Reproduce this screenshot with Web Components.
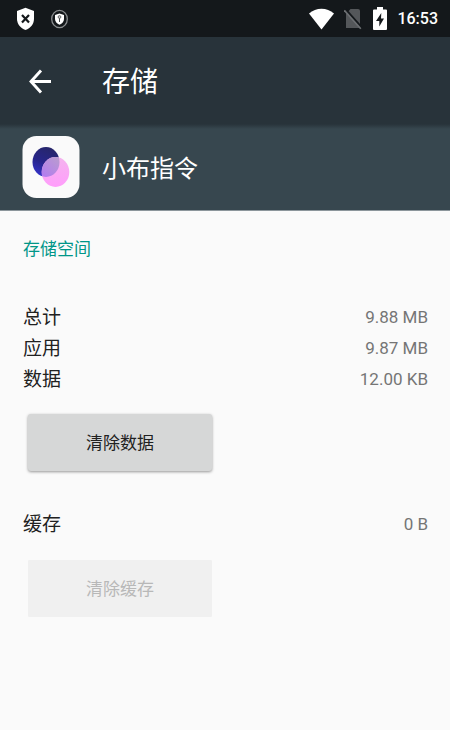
<!DOCTYPE html>
<html lang="zh-CN">
<head>
<meta charset="utf-8">
<meta name="viewport" content="width=device-width, initial-scale=1">
<title>存储</title>
<style>
body { margin: 0; background: #fafafa; font-family: Roboto, "Noto Sans CJK SC", sans-serif; color: #212121; }
</style>
</head>
<body>
<storage-screen></storage-screen>
<script>
function define(name, html, setup) {
  const template = document.createElement('template');
  template.innerHTML = html;
  customElements.define(name, class extends HTMLElement {
    constructor() {
      super();
      this.attachShadow({ mode: 'open' }).append(template.content.cloneNode(true));
    }
    connectedCallback() { if (setup) setup(this, this.shadowRoot); }
  });
}

define('status-bar', `
<style>
:host { display: flex; align-items: center; justify-content: space-between; height: 37px; padding: 0 12px 0 16px; background: #14181b; color: #fff; }
div { display: flex; align-items: center; }
.left { gap: 16px; }
.right { gap: 10px; }
svg { display: block; }
time { font-size: 16px; font-weight: 500; line-height: 20px; }
</style>
<div class="left">
  <svg width="19" height="24" viewBox="0 0 19 24" aria-hidden="true"><path d="M9.500.8 18 4v8c0 5-3.500 9.200-8.500 11C4.500 21.200 1 17 1 12V4Z" fill="#fff"/><path d="m6 8 7 7.500m0-7.500-7 7.500" stroke="#14181b" stroke-width="2.200"/></svg>
  <svg width="18" height="20" viewBox="0 0 18 20" aria-hidden="true"><ellipse cx="8.500" cy="10" rx="7.800" ry="8.700" fill="none" stroke="#8b8e90" stroke-width="1.300"/><path d="M8.500 4.500 13 6v4c0 2.700-1.900 4.600-4.500 5.700C5.900 14.600 4 12.700 4 10V6Z" fill="#fff"/><path d="M8.500 8.500V13" stroke="#44484a"/><circle cx="8.500" cy="8" r="1.400" fill="#ccc" stroke="#44484a" stroke-width=".7"/></svg>
</div>
<div class="right">
  <svg width="25" height="22" viewBox="0 0 25 22" aria-hidden="true"><path d="M0 5.500C7-1 18-1 25 5.500L12.500 21.500Z" fill="#fff"/></svg>
  <svg width="19" height="22" viewBox="0 0 19 22" aria-hidden="true"><path d="M6.500 1H14a2 2 0 0 1 2 2v17H2V6Z" fill="#54575a"/><path d="m1.500 1.500 16 18" stroke="#14181b" stroke-width="2.600"/><path d="m.3 2.300 16.500 18.500" stroke="#6c6f72" stroke-width="1.700"/></svg>
  <svg width="14" height="23" viewBox="0 0 14 23" aria-hidden="true"><path d="M4 0h6v2.500h3a1 1 0 0 1 1 1V22a1 1 0 0 1-1 1H1a1 1 0 0 1-1-1V3.500a1 1 0 0 1 1-1h3Z" fill="#fff"/><path d="M8.300 6 3 14h3.300v5.500L11 11.500H8Z" fill="#14181b"/></svg>
  <time datetime="16:53">16:53</time>
</div>`);

define('app-bar', `
<style>
:host { display: flex; align-items: center; gap: 38px; height: 87px; padding: 0 16px; background: #28333a; color: #fff; }
button { display: grid; place-items: center; width: 48px; height: 48px; margin: 0; padding: 0; border: 0; background: none; color: inherit; }
h1 { margin: 0; padding-top: 4px; font-size: 28px; line-height: 40px; font-weight: 400; }
</style>
<button type="button" aria-label="返回"><svg width="24" height="26" viewBox="0 0 24 26" fill="none" stroke="currentColor" stroke-width="2.900" aria-hidden="true"><path d="M23 13.500H3M13 2.500 3 13.500l10 11"/></svg></button>
<h1><slot></slot></h1>`);

define('app-logo', `
<style>:host, svg { display: block; }</style>
<svg width="58" height="64" viewBox="0 0 58 64" aria-hidden="true">
  <defs>
    <linearGradient id="blue" x1=".7" y1="0" x2=".3" y2="1"><stop offset="0" stop-color="#272668"/><stop offset=".55" stop-color="#27258a"/><stop offset="1" stop-color="#3433cb"/></linearGradient>
    <linearGradient id="pink" x1=".5" y1="0" x2=".5" y2="1"><stop offset="0" stop-color="#f4b4ee"/><stop offset="1" stop-color="#ff9dfb"/></linearGradient>
    <linearGradient id="overlap" gradientUnits="userSpaceOnUse" x1="21" y1="42" x2="37" y2="24"><stop offset="0" stop-color="#b37bf0"/><stop offset="1" stop-color="#b99bd0"/></linearGradient>
    <clipPath id="disc"><ellipse cx="24" cy="27" rx="13.500" ry="15"/></clipPath>
  </defs>
  <rect x=".5" y="1" width="57" height="62" rx="14" fill="#fafafa"/>
  <ellipse cx="24" cy="27" rx="13.500" ry="15" fill="url(#blue)"/>
  <ellipse cx="33.500" cy="37" rx="13.800" ry="15" fill="url(#pink)"/>
  <ellipse cx="33.500" cy="37" rx="13.800" ry="15" fill="url(#overlap)" clip-path="url(#disc)"/>
</svg>`);

define('app-header', `
<style>
:host { display: flex; align-items: center; gap: 22px; height: 86px; padding: 0 22px; background: linear-gradient(#28333a, #37474f 5px); color: #fff; border-bottom: 1px solid #8c969b; }
h2 { margin: 0; padding-top: 4px; font-size: 24px; line-height: 36px; font-weight: 400; }
</style>
<app-logo></app-logo><h2><slot></slot></h2>`);

define('usage-row', `
<style>
:host { display: flex; align-items: center; justify-content: space-between; height: 31px; font-size: 19px; line-height: 31px; }
.value { font-size: 17px; color: #757575; }
</style>
<span><slot></slot></span><span class="value"><slot name="value"></slot></span>`);

define('action-button', `
<style>
:host { display: block; padding: 0 5px; }
button { display: block; width: 184px; height: 57px; margin: 0; padding: 0; border: 0; border-radius: 3px; background: #d6d7d7; color: #212121; font: inherit; font-size: 17px; line-height: 24px; box-shadow: 0 1px 3px rgba(0,0,0,.4); }
button:disabled { border-radius: 1px; background: #f0f0f0; color: #b8b8b8; box-shadow: none; }
</style>
<button type="button"><slot></slot></button>`, (host, root) => {
  root.querySelector('button').disabled = host.hasAttribute('disabled');
});

define('storage-section', `
<style>
:host { display: block; padding: 26px 22px 0 23px; }
h3 { margin: 0 0 41px; font-size: 17px; line-height: 24px; font-weight: 400; color: #009688; }
.usage { margin-bottom: 19px; }
.cache { margin: 38px 0 20px; }
</style>
<h3>存储空间</h3>
<div class="usage">
  <usage-row>总计<span slot="value">9.88 MB</span></usage-row>
  <usage-row>应用<span slot="value">9.87 MB</span></usage-row>
  <usage-row>数据<span slot="value">12.00 KB</span></usage-row>
</div>
<action-button>清除数据</action-button>
<div class="cache"><usage-row>缓存<span slot="value">0 B</span></usage-row></div>
<action-button disabled>清除缓存</action-button>`);

define('storage-screen', `
<style>:host { display: block; }</style>
<status-bar></status-bar>
<app-bar>存储</app-bar>
<app-header>小布指令</app-header>
<main><storage-section></storage-section></main>`);
</script>
</body>
</html>
